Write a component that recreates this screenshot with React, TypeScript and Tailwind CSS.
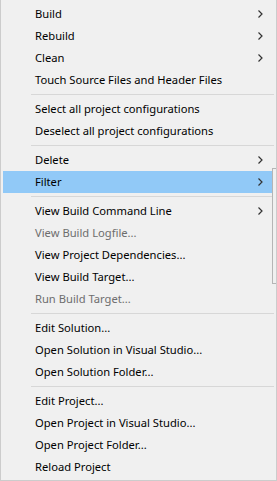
import React from 'react';

type Item =
  | { kind: 'sep' }
  | { kind: 'item'; label: string; sub?: boolean; disabled?: boolean; active?: boolean };

const items: Item[] = [
  { kind: 'item', label: 'Build', sub: true },
  { kind: 'item', label: 'Rebuild', sub: true },
  { kind: 'item', label: 'Clean', sub: true },
  { kind: 'item', label: 'Touch Source Files and Header Files' },
  { kind: 'sep' },
  { kind: 'item', label: 'Select all project configurations' },
  { kind: 'item', label: 'Deselect all project configurations' },
  { kind: 'sep' },
  { kind: 'item', label: 'Delete', sub: true },
  { kind: 'item', label: 'Filter', sub: true, active: true },
  { kind: 'sep' },
  { kind: 'item', label: 'View Build Command Line', sub: true },
  { kind: 'item', label: 'View Build Logfile...', disabled: true },
  { kind: 'item', label: 'View Project Dependencies...' },
  { kind: 'item', label: 'View Build Target...' },
  { kind: 'item', label: 'Run Build Target...', disabled: true },
  { kind: 'sep' },
  { kind: 'item', label: 'Edit Solution...' },
  { kind: 'item', label: 'Open Solution in Visual Studio...' },
  { kind: 'item', label: 'Open Solution Folder...' },
  { kind: 'sep' },
  { kind: 'item', label: 'Edit Project...' },
  { kind: 'item', label: 'Open Project in Visual Studio...' },
  { kind: 'item', label: 'Open Project Folder...' },
  { kind: 'item', label: 'Reload Project' },
];

function Chevron() {
  return (
    <svg width="5" height="8" viewBox="0 0 5 8" className="absolute left-[255px] top-[7px]">
      <polyline points="0.5,0.5 4,4 0.5,7.5" fill="none" stroke="#333" strokeWidth="1.2" />
    </svg>
  );
}

export default function App() {
  return (
    <div className="relative w-[277px] h-[481px] overflow-hidden bg-[#f0f0f0] border-l border-r border-b border-[#cccccc] pt-[3px] px-[2px] font-['Noto_Sans',sans-serif] text-[11.2px]">
      {items.map((it, i) =>
        it.kind === 'sep' ? (
          <div key={i} className="h-[7px] flex items-center pl-[28px]">
            <div className="h-px w-full bg-[#d7d7d7]" />
          </div>
        ) : (
          <div
            key={i}
            className={`relative h-[22px] flex items-center pl-[32px] ${
              it.active ? 'bg-[#91c9f7]' : ''
            } ${it.disabled ? 'text-[#6d6d6d]' : 'text-black'}`}
          >
            <span className="leading-none">{it.label}</span>
            {it.sub && <Chevron />}
          </div>
        )
      )}
      {/* edge of the open Filter submenu */}
      <div className="absolute left-[271px] top-[168px] w-[20px] h-[116px] bg-[#f0f0f0] border border-[#b5b5b5]" />
    </div>
  );
}
